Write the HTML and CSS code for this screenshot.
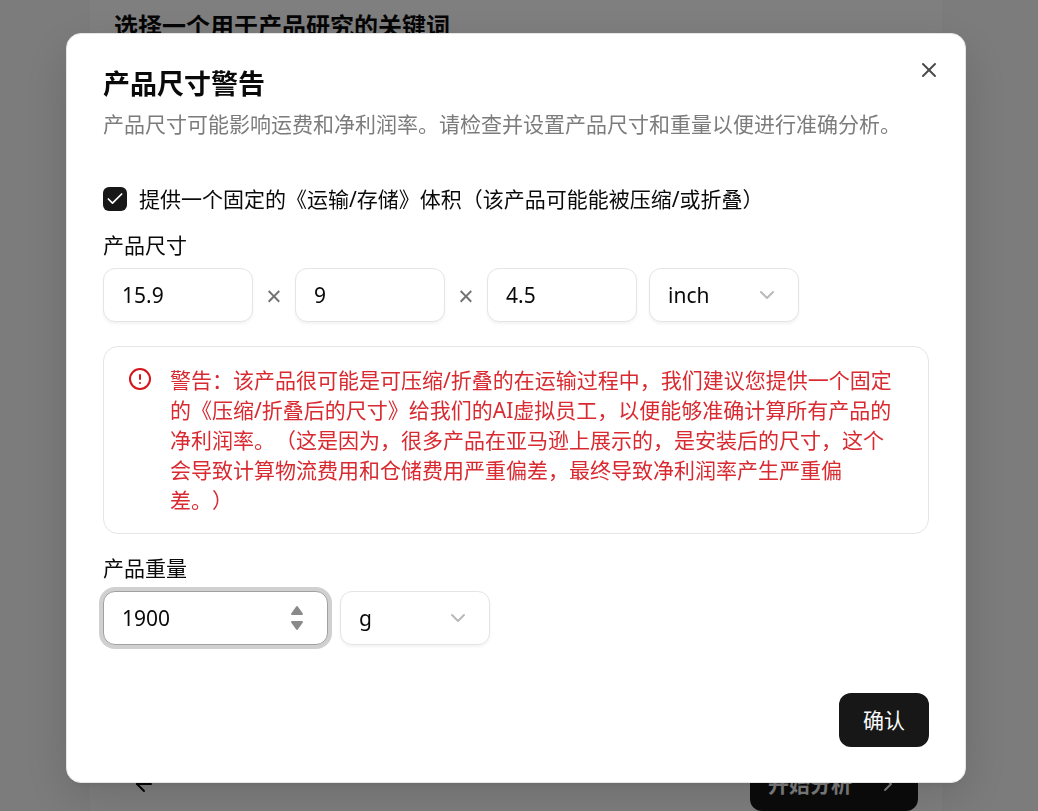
FILE: index.html
```html
<!DOCTYPE html>
<html lang="zh-CN">
<head>
<meta charset="utf-8">
<meta name="viewport" content="width=device-width, initial-scale=1">
<title>产品尺寸警告</title>
<link rel="stylesheet" href="styles.css">
</head>
<body>
<main class="page">
  <section class="panel">
    <h1 class="panel-title">选择一个用于产品研究的关键词</h1>
    <div class="panel-footer">
      <button class="back-button" type="button" aria-label="返回">
        <svg class="icon" viewBox="0 0 24 24" aria-hidden="true"><path d="m12 19-7-7 7-7"/><path d="M19 12H5"/></svg>
      </button>
      <button class="start-button" type="button">开始分析
        <svg class="icon" viewBox="0 0 24 24" aria-hidden="true"><path d="m9 18 6-6-6-6"/></svg>
      </button>
    </div>
  </section>
</main>

<div class="overlay">
  <form class="dialog" role="dialog" aria-modal="true" aria-labelledby="dialog-title" aria-describedby="dialog-text">
    <button class="close-button" type="button" aria-label="关闭">
      <svg class="icon" viewBox="0 0 24 24" aria-hidden="true"><path d="M18 6 6 18"/><path d="m6 6 12 12"/></svg>
    </button>
    <header class="dialog-header">
      <h2 class="dialog-title" id="dialog-title">产品尺寸警告</h2>
      <p class="dialog-text" id="dialog-text">产品尺寸可能影响运费和净利润率。请检查并设置产品尺寸和重量以便进行准确分析。</p>
    </header>

    <div class="dialog-body">
      <div class="check-row">
        <span class="check">
          <input class="check-input" type="checkbox" id="fixed" checked>
          <svg class="check-mark" viewBox="0 0 24 24" aria-hidden="true"><path d="M20 6 9 17l-5-5"/></svg>
        </span>
        <label for="fixed">提供一个固定的《运输/存储》体积（该产品可能能被压缩/或折叠）</label>
      </div>

      <div class="field">
        <label for="length">产品尺寸</label>
        <div class="controls">
          <input class="input" id="length" type="text" inputmode="decimal" value="15.9">
          <span class="times">×</span>
          <input class="input" type="text" inputmode="decimal" value="9" aria-label="宽度">
          <span class="times">×</span>
          <input class="input" type="text" inputmode="decimal" value="4.5" aria-label="高度">
          <span class="select-wrap">
            <select class="input" aria-label="尺寸单位"><option>inch</option><option>cm</option></select>
            <svg class="chevron" viewBox="0 0 24 24" aria-hidden="true"><path d="m6 9 6 6 6-6"/></svg>
          </span>
        </div>
      </div>

      <div class="alert" role="alert">
        <svg class="icon alert-icon" viewBox="0 0 24 24" aria-hidden="true"><circle cx="12" cy="12" r="10"/><path d="M12 8v4"/><path d="M12 16h.01"/></svg>
        <p class="alert-text">警告：该产品很可能是可压缩/折叠的在运输过程中，我们建议您提供一个固定的《压缩/折叠后的尺寸》给我们的AI虚拟员工，以便能够准确计算所有产品的净利润率。（这是因为，很多产品在亚马逊上展示的，是安装后的尺寸，这个会导致计算物流费用和仓储费用严重偏差，最终导致净利润率产生严重偏差。）</p>
      </div>

      <div class="field">
        <label for="weight">产品重量</label>
        <div class="controls">
          <span class="number-wrap">
            <input class="input input-active" id="weight" type="number" value="1900">
            <svg class="stepper" viewBox="0 0 14 26" aria-hidden="true"><path d="M7 2 12 9H2Z"/><path d="M7 24 12 17H2Z"/></svg>
          </span>
          <span class="select-wrap">
            <select class="input" aria-label="重量单位"><option>g</option><option>kg</option></select>
            <svg class="chevron" viewBox="0 0 24 24" aria-hidden="true"><path d="m6 9 6 6 6-6"/></svg>
          </span>
        </div>
      </div>
    </div>

    <footer class="dialog-footer">
      <button class="confirm-button" type="submit">确认</button>
    </footer>
  </form>
</div>
</body>
</html>
```

FILE: styles.css
```css
* { box-sizing: border-box; }

body {
  margin: 0;
  color: #0a0a0a;
  background: #f8f8f8;
  font-family: "Noto Sans", "Noto Sans CJK SC", sans-serif;
  font-size: 21px;
  line-height: 21px;
  text-spacing-trim: space-all;
  overflow: hidden;
}

h1, h2, p { margin: 0; }
button, input, select { font: inherit; color: inherit; }
button { border: 0; background: none; padding: 0; }

.icon {
  width: 24px;
  height: 24px;
  flex: none;
  fill: none;
  stroke: currentColor;
  stroke-width: 2;
  stroke-linecap: round;
  stroke-linejoin: round;
}

.page {
  display: flex;
  justify-content: center;
  min-height: 100vh;
  padding-right: 6px;
}

.panel {
  display: flex;
  flex-direction: column;
  justify-content: space-between;
  width: 100%;
  max-width: 852px;
  padding: 11px 24px 0;
  background: #fff;
}

.panel-title { font-size: 24px; line-height: 30px; font-weight: 700; }

.panel-footer { display: flex; justify-content: space-between; }

.back-button {
  display: flex;
  align-items: center;
  height: 54px;
  padding: 0 18px;
}

.start-button {
  display: flex;
  align-items: center;
  justify-content: space-between;
  width: 168px;
  height: 54px;
  padding: 0 18px;
  border-radius: 12px;
  color: #fff;
  background: #171717;
  font-weight: 700;
}

.overlay {
  position: fixed;
  inset: 0;
  display: flex;
  align-items: flex-start;
  justify-content: center;
  padding: 33px 6px 0 0;
  background: rgb(0 0 0 / 50%);
}

.dialog {
  position: relative;
  width: 100%;
  max-width: 900px;
  padding: 36px 36px 35px;
  border: 1px solid #e5e5e5;
  border-radius: 15px;
  background: #fff;
  box-shadow: 0 15px 48px rgb(0 0 0 / 15%), 0 6px 9px -6px rgb(0 0 0 / 10%);
}

.close-button {
  position: absolute;
  top: 24px;
  right: 24px;
  display: flex;
  color: #4a4a4a;
}

.dialog-header { display: flex; flex-direction: column; gap: 12px; }
.dialog-title { font-size: 27px; line-height: 27px; font-weight: 700; }
.dialog-text { color: #7c7c7c; line-height: 30px; }

.dialog-body {
  display: flex;
  flex-direction: column;
  gap: 24px;
  padding: 48px 0;
}

.check-row { display: flex; align-items: center; gap: 12px; line-height: 24px; }
.check { display: grid; }

.check-input {
  grid-area: 1 / 1;
  appearance: none;
  width: 24px;
  height: 24px;
  margin: 0;
  border-radius: 6px;
  background: #171717;
}

.check-mark {
  grid-area: 1 / 1;
  place-self: center;
  width: 20px;
  height: 20px;
  fill: none;
  stroke: #fff;
  stroke-width: 2;
  stroke-linecap: round;
  stroke-linejoin: round;
  pointer-events: none;
}

.field { display: flex; flex-direction: column; gap: 12px; }
.controls { display: flex; align-items: center; gap: 12px; }

.input {
  appearance: none;
  width: 150px;
  height: 54px;
  padding: 0 18px;
  border: 1px solid #e5e5e5;
  border-radius: 12px;
  outline: 0;
  background: #fff;
  box-shadow: 0 2px 3px rgb(0 0 0 / 5%);
  line-height: 30px;
}

.times { width: 18px; text-align: center; color: #737373; font-size: 27px; }

.select-wrap, .number-wrap { display: grid; align-items: center; }
.select-wrap > *, .number-wrap > * { grid-area: 1 / 1; }

.chevron {
  justify-self: end;
  width: 24px;
  height: 24px;
  margin-right: 20px;
  fill: none;
  stroke: #b9b9b9;
  stroke-width: 2;
  stroke-linecap: round;
  stroke-linejoin: round;
  pointer-events: none;
}

.input-active {
  width: 225px;
  border-color: #a1a1a1;
  box-shadow: 0 0 0 4px #d0d0d0;
  appearance: textfield;
}

.input-active::-webkit-inner-spin-button { appearance: none; margin: 0; }

.stepper {
  justify-self: end;
  width: 14px;
  height: 26px;
  margin-right: 24px;
  fill: #8a8a8a;
  stroke: #8a8a8a;
  stroke-width: 2;
  stroke-linejoin: round;
  pointer-events: none;
}

.alert {
  display: flex;
  gap: 18px;
  padding: 18px 24px;
  border: 1px solid #e5e5e5;
  border-radius: 15px;
}

.alert-icon { margin-top: 2px; color: #d4151c; }
.alert-text { color: #d82a30; line-height: 30px; }

.dialog-footer { display: flex; justify-content: flex-end; }

.confirm-button {
  height: 54px;
  padding: 0 24px;
  border-radius: 12px;
  color: #fafafa;
  background: #171717;
}
```
